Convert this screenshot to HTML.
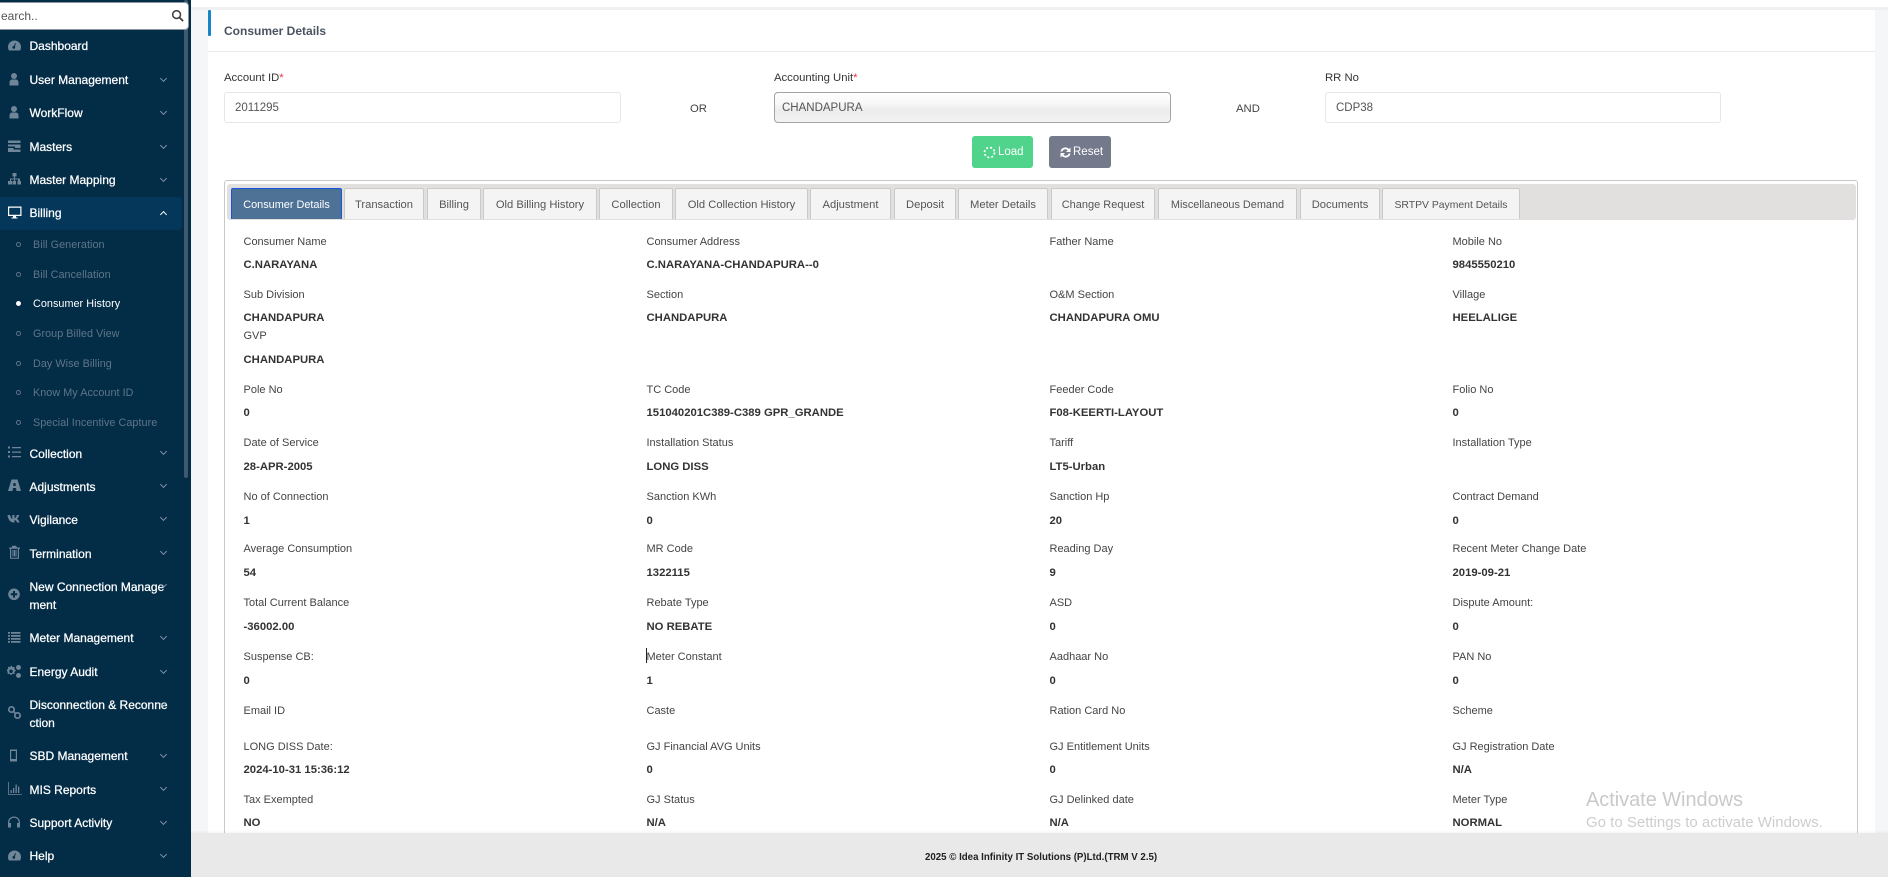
<!DOCTYPE html>
<html><head><meta charset="utf-8"><title>Consumer Details</title>
<style>
*{box-sizing:border-box}
html,body{margin:0;padding:0;width:1888px;height:877px;overflow:hidden;background:#f5f6f8;font-family:"Liberation Sans",sans-serif}
#side{position:absolute;left:0;top:0;width:191px;height:877px;background:#032c47;overflow:hidden}
#thumb{position:absolute;left:184px;top:0;width:4px;height:478px;background:#3f5a70;border-radius:2px}
#search{position:absolute;left:-6px;top:2px;width:195px;height:28px;background:#fff;border:1px solid #8a949c;border-radius:4px;font-size:12px;color:#555;line-height:26px;padding-left:0;overflow:hidden}
#search span{position:absolute;left:6px;top:0;white-space:nowrap}
.hl{position:absolute;left:0;top:197px;width:182px;height:33px;background:#04375a;border-radius:0 4px 4px 0}
.m{position:absolute;left:29.5px;color:#fff;font-size:12px;font-weight:400;line-height:18px;white-space:nowrap;-webkit-text-stroke:.25px #fff}
.s{position:absolute;left:33px;color:#5f7688;font-size:10.8px;line-height:16px;white-space:nowrap;letter-spacing:.05px}
.d{position:absolute;left:15.5px;width:5px;height:5px;border:1px solid #5f7688;border-radius:50%}
.ch{position:absolute;left:161px;width:5px;height:5px;border-right:1px solid #7f94a6;border-bottom:1px solid #7f94a6;transform:rotate(45deg)}
.i{position:absolute;left:7px;width:15px;height:15px;fill:#6f8598}
#top{position:absolute;left:191px;top:0;width:1697px;height:7px;background:#fff}
#strip{position:absolute;left:191px;top:7px;width:1697px;height:3px;background:#eef0f2}
#card{position:absolute;left:208px;top:10px;width:1667px;height:830px;background:#fff}
#bar{position:absolute;left:208px;top:10px;width:3px;height:26px;background:#1585c8;border-radius:1px}
#ttl{position:absolute;left:224px;top:22px;font-size:12px;font-weight:700;color:#4a5460;line-height:18px;white-space:nowrap}
#hr{position:absolute;left:208px;top:51px;width:1667px;height:1px;background:#e9ecef}
.lb{position:absolute;top:69.500px;font-size:11.3px;color:#333;line-height:16px;white-space:nowrap}
.lb b{color:#e8324a;font-weight:400}
.inp{position:absolute;top:92px;height:31px;width:397px;background:#fff;border:1px solid #e4e7ea;border-radius:3px;font-size:11.500px;color:#555;line-height:30px;padding-left:10px}
.txt{position:absolute;top:101px;font-size:11.300px;color:#444;line-height:16px}
.btn{position:absolute;top:136px;height:32px;border-radius:3px;color:#fff;font-size:11.500px;line-height:32px}
.btn span{position:absolute;top:0}
#box{position:absolute;left:224px;top:180px;width:1634px;height:660px;border:1px solid #c8c8c8;border-bottom:0;border-radius:3px 3px 0 0}
#tabbar{position:absolute;left:227px;top:184px;width:1629px;height:36px;background:#e2e0df;border-radius:3px}
.t{position:absolute;top:188px;height:31px;background:#f4f4f4;border:1px solid #cbc9c8;border-bottom:0;font-size:11.200px;color:#555;line-height:33px;text-align:center;white-space:nowrap;border-radius:2px 2px 0 0}
.t.on{background:#4e7296;color:#fff;border:1px solid #1a55e0;border-bottom:0}
.r{position:absolute;left:0;width:0;height:0}
.c1,.c2,.c3,.c4{position:absolute;top:0;white-space:nowrap}
.c1{left:243.500px}.c2{left:646.500px}.c3{left:1049.500px}.c4{left:1452.500px}
.l{position:absolute;left:0;top:0;font-size:11px;line-height:16px;color:#444}
.v{position:absolute;left:0;top:23px;font-size:11.300px;line-height:16px;font-weight:700;color:#333}
#foot{position:absolute;left:191px;top:833px;width:1697px;height:44px;background:#e9e9e9;box-shadow:0 -1px 2px rgba(0,0,0,.05)}
#foot span{position:absolute;left:734px;top:17px;font-size:9.700px;font-weight:700;color:#222;line-height:16px;white-space:nowrap}
#aw1{position:absolute;left:1586px;top:789px;font-size:19.900px;line-height:22px;color:#c9c9c9;white-space:nowrap}
#aw2{position:absolute;left:1586px;top:814px;font-size:15px;line-height:18px;color:#cdcdcd;white-space:nowrap}
#caret{position:absolute;left:646px;top:648px;width:1px;height:15px;background:#222}
</style></head><body>

<div id="side">
<div id="thumb"></div>
<div class="hl"></div>
<div id="search"><span>earch..</span>
<svg style="position:absolute;left:176px;top:6px" width="13" height="13" viewBox="0 0 14 14"><circle cx="6" cy="6" r="4.200" fill="none" stroke="#444" stroke-width="1.700"/><path d="M9 9l4 4" stroke="#444" stroke-width="2"/></svg></div>

<svg class="i" style="top:38px" viewBox="0 0 15 15"><path d="M7.500 2.500a6.500 6.500 0 0 0-6.500 6.500c0 1.500.4 2.700 1 3.500h11c.6-.8 1-2 1-3.500a6.500 6.500 0 0 0-6.500-6.500zM6.800 8l1.500-3 .6.2-1 3.300a1.400 1.400 0 1 1-1.100-.5z"/></svg>
<div class="m" style="top:37px">Dashboard</div>

<svg class="i" style="top:72px" viewBox="0 0 15 15"><circle cx="7" cy="4" r="3"/><path d="M2.500 13.500v-3c0-2 1.500-3 2.500-3h4c1 0 2.500 1 2.500 3v3z"/></svg>
<div class="m" style="top:71px">User Management</div><div class="ch" style="top:76px"></div>

<svg class="i" style="top:105px" viewBox="0 0 15 15"><circle cx="7" cy="4" r="3"/><path d="M2.500 13.500v-3c0-2 1.500-3 2.500-3h4c1 0 2.500 1 2.500 3v3z"/></svg>
<div class="m" style="top:104px">WorkFlow</div><div class="ch" style="top:109px"></div>

<svg class="i" style="top:139px" viewBox="0 0 15 15"><path d="M1 1.500h12.500v2.500H1zM1 5.500h12.500V9H8V7.500H1zM1 9h5.500v1.500H13.500V13H1z"/></svg>
<div class="m" style="top:138px">Masters</div><div class="ch" style="top:143px"></div>

<svg class="i" style="top:172px" viewBox="0 0 15 15"><path d="M5.500 1h4v3.500h-1.500v2h5v2.500h1v3.500h-3.500V9H11V7.500H8V9h1v3.500H5.500V9H7V7.500H4V9h1v3.500H1V9h2V6.500h4v-2H5.500z"/></svg>
<div class="m" style="top:171px">Master Mapping</div><div class="ch" style="top:176px"></div>

<svg class="i" style="top:205px;fill:#fff;width:15px" viewBox="0 0 15 15"><path d="M1 1.500h13.500v9.500H9v1.500h1.500v1h-6v-1H6V11H1zM2.200 2.700V9.800h11.100V2.700z"/></svg>
<div class="m" style="top:204px">Billing</div>
<div class="ch" style="top:212px;border-color:#fff;border-width:1.500px;transform:rotate(225deg)"></div>

<div class="d" style="top:242px"></div><div class="s" style="top:237px">Bill Generation</div>
<div class="d" style="top:272px"></div><div class="s" style="top:267px">Bill Cancellation</div>
<div class="d" style="top:301px;background:#fff;border-color:#fff"></div><div class="s" style="top:296px;color:#fff">Consumer History</div>
<div class="d" style="top:331px"></div><div class="s" style="top:326px">Group Billed View</div>
<div class="d" style="top:361px"></div><div class="s" style="top:356px">Day Wise Billing</div>
<div class="d" style="top:390px"></div><div class="s" style="top:385px">Know My Account ID</div>
<div class="d" style="top:420px"></div><div class="s" style="top:415px">Special Incentive Capture</div>

<svg class="i" style="top:445px" viewBox="0 0 15 15"><path d="M1 1.500h2v2H1zM5 2h9v1.300H5zM1 6h2v2H1zM5 6.500h9v1.300H5zM1 10.500h2v2H1zM5 11h9v1.300H5z"/></svg>
<div class="m" style="top:445px">Collection</div><div class="ch" style="top:449px"></div>

<svg class="i" style="top:478px" viewBox="0 0 15 15"><path d="M4.500 1.500h6l3.500 11.500H9.500L9 10H6l-.5 3H1zM6.500 5l-.3 3h2.600l-.3-3z"/></svg>
<div class="m" style="top:478px">Adjustments</div><div class="ch" style="top:482px"></div>

<svg class="i" style="top:511px" viewBox="0 0 15 15"><path d="M.5 4h2.500c.5 2 1.500 3.500 2.300 4V4h2.200v3.500C8.300 7.300 9.300 6 9.800 4h2.400c-.4 1.800-1.600 3.300-2.300 3.800.7.400 2 1.600 2.800 3.700H10C9.500 10 8.500 9 7.500 8.700v2.800H6.800C3.500 11.500 1 8.500.5 4z"/></svg>
<div class="m" style="top:511px">Vigilance</div><div class="ch" style="top:515px"></div>

<svg class="i" style="top:545px" viewBox="0 0 15 15"><path fill-rule="evenodd" d="M5 .8h4L10 2.500h3v1.300h-1v10H3v-10H2V2.500h3zM4.200 3.800V12.700h6.600V3.800zM5.500 5h1v6.500h-1zM7 5h1v6.500H7zM8.500 5h1v6.500h-1z"/></svg>
<div class="m" style="top:545px">Termination</div><div class="ch" style="top:549px"></div>

<svg class="i" style="top:587px" viewBox="0 0 15 15"><path fill-rule="evenodd" d="M7 1.500a5.800 5.800 0 1 1 0 11.600 5.800 5.800 0 0 1 0-11.600zM6 4v2.300H3.700v2H6v2.300h2V8.300h2.300v-2H8V4z"/></svg>
<div class="m" style="top:578px;line-height:18px">New Connection Manage<br>ment</div><div class="ch" style="top:582px"></div>

<svg class="i" style="top:630px" viewBox="0 0 15 15"><path d="M1 2h2v1.700H1zM4 2h9.500v1.700H4zM1 5h2v1.700H1zM4 5h9.500v1.700H4zM1 8h2v1.700H1zM4 8h9.500v1.700H4zM1 11h2v1.700H1zM4 11h9.500v1.700H4z"/></svg>
<div class="m" style="top:629px">Meter Management</div><div class="ch" style="top:634px"></div>

<svg class="i" style="top:664px" viewBox="0 0 15 15"><path fill-rule="evenodd" d="M5 3l1 .3.800-.6 1 1-.5.900.3.900 1 .2v1.500l-1 .2-.3.900.5.900-1 1-.8-.6-1 .3-.2 1H3.300l-.2-1-1-.3-.8.600-1-1 .5-.9-.3-.9-.5-.2V5.500l1-.2.300-.9-.5-.900 1-1 .8.600 1-.3.200-1h1.500zM4 5.500a1.800 1.800 0 1 0 0 3.600 1.800 1.800 0 0 0 0-3.600zM11.500 1a2 2 0 1 1 0 5 2 2 0 0 1 0-5zM11.500 9a2 2 0 1 1 0 5 2 2 0 0 1 0-5z"/></svg>
<div class="m" style="top:663px">Energy Audit</div><div class="ch" style="top:668px"></div>

<svg class="i" style="top:705px" viewBox="0 0 15 15"><g fill="none" stroke="#6f8598" stroke-width="1.700"><circle cx="4.500" cy="4.500" r="2.700"/><circle cx="10.500" cy="10.500" r="2.700"/><path d="M6 6l3 3"/></g></svg>
<div class="m" style="top:696px">Disconnection &amp; Reconne<br>ction</div><div class="ch" style="top:701px"></div>

<svg class="i" style="top:748px" viewBox="0 0 15 15"><path fill-rule="evenodd" d="M3 1.500h7v12H3zM4.200 3v8h4.600V3z"/></svg>
<div class="m" style="top:747px">SBD Management</div><div class="ch" style="top:752px"></div>

<svg class="i" style="top:781px" viewBox="0 0 15 15"><path d="M1 1h.8v12h13v.8H1zM3.500 9h1.300v3H3.500zM6 7h1.300v5H6zM8.500 3.500h1.300V12H8.500zM11 5.500h1.300V12H11z"/></svg>
<div class="m" style="top:781px">MIS Reports</div><div class="ch" style="top:785px"></div>

<svg class="i" style="top:815px" viewBox="0 0 15 15"><path fill-rule="evenodd" d="M7 1.500c3.500 0 6 2.500 6 6v5h-3V8h1.700v-.5c0-2.800-2-4.800-4.700-4.800S2.300 4.700 2.300 7.500V8H4v4.500H1v-5c0-3.500 2.500-6 6-6z"/></svg>
<div class="m" style="top:814px">Support Activity</div><div class="ch" style="top:819px"></div>

<svg class="i" style="top:848px" viewBox="0 0 15 15"><path d="M7.500 2.500a6.500 6.500 0 0 0-6.500 6.500c0 1.500.4 2.700 1 3.500h11c.6-.8 1-2 1-3.500a6.500 6.500 0 0 0-6.500-6.500zM6.800 8l1.500-3 .6.2-1 3.300a1.400 1.400 0 1 1-1.100-.5z"/></svg>
<div class="m" style="top:847px">Help</div><div class="ch" style="top:852px"></div>
</div>

<div id="top"></div><div id="strip"></div>
<div id="card"></div><div id="bar"></div>
<div id="ttl">Consumer Details</div>
<div id="hr"></div>

<div class="lb" style="left:224px">Account ID<b>*</b></div>
<div class="inp" style="left:224px">2011295</div>
<div class="txt" style="left:690px">OR</div>
<div class="lb" style="left:774px">Accounting Unit<b>*</b></div>
<div class="inp" style="left:774px;border:1px solid #a3a3a3;border-radius:4px;background:linear-gradient(#fff 0,#f8f8f8 35%,#ececec 60%,#f3f3f3 100%);padding-left:7px;color:#555">CHANDAPURA</div>
<div class="txt" style="left:1236px">AND</div>
<div class="lb" style="left:1325px">RR No</div>
<div class="inp" style="left:1325px;width:396px">CDP38</div>

<div class="btn" style="left:972px;width:61px;background:#50d38b">
<svg style="position:absolute;left:11px;top:10px" width="13" height="13" viewBox="0 0 13 13"><circle cx="6.500" cy="6.500" r="5" fill="none" stroke="#fff" stroke-width="1.800" stroke-dasharray="2 2"/></svg>
<span style="left:26px">Load</span></div>
<div class="btn" style="left:1049px;width:62px;background:#75798c">
<svg style="position:absolute;left:10px;top:10px" width="13" height="13" viewBox="0 0 13 13"><path d="M1.500 5.500A5 5 0 0 1 10 3l1.500-1.500V6H7l1.700-1.700A3.200 3.200 0 0 0 3.300 5.500zM11.500 7.500A5 5 0 0 1 3 10l-1.500 1.500V7H6L4.300 8.700a3.200 3.200 0 0 0 5.400-1.200z" fill="#fff"/></svg>
<span style="left:24px">Reset</span></div>

<div id="box"></div>
<div id="tabbar"></div>
<div class="t on" style="left:231px;width:111px;font-size:10.900px">Consumer Details</div>
<div class="t" style="left:344px;width:80px">Transaction</div>
<div class="t" style="left:427px;width:54px">Billing</div>
<div class="t" style="left:483px;width:114px">Old Billing History</div>
<div class="t" style="left:599px;width:74px">Collection</div>
<div class="t" style="left:675px;width:133px">Old Collection History</div>
<div class="t" style="left:810px;width:81px">Adjustment</div>
<div class="t" style="left:894px;width:62px">Deposit</div>
<div class="t" style="left:958px;width:90px">Meter Details</div>
<div class="t" style="left:1051px;width:104px;font-size:11px">Change Request</div>
<div class="t" style="left:1158px;width:139px;font-size:10.900px">Miscellaneous Demand</div>
<div class="t" style="left:1300px;width:80px">Documents</div>
<div class="t" style="left:1382px;width:138px;font-size:10.400px">SRTPV Payment Details</div>

<div class="r" style="top:234px">
<div class="c1"><div class="l">Consumer Name</div><div class="v">C.NARAYANA</div></div>
<div class="c2"><div class="l">Consumer Address</div><div class="v">C.NARAYANA-CHANDAPURA--0</div></div>
<div class="c3"><div class="l">Father Name</div></div>
<div class="c4"><div class="l">Mobile No</div><div class="v">9845550210</div></div>
</div>
<div class="r" style="top:287px">
<div class="c1"><div class="l">Sub Division</div><div class="v">CHANDAPURA</div></div>
<div class="c2"><div class="l">Section</div><div class="v">CHANDAPURA</div></div>
<div class="c3"><div class="l">O&amp;M Section</div><div class="v">CHANDAPURA OMU</div></div>
<div class="c4"><div class="l">Village</div><div class="v">HEELALIGE</div></div>
</div>
<div class="r" style="top:328px">
<div class="c1"><div class="l">GVP</div><div class="v" style="top:24px">CHANDAPURA</div></div>
</div>
<div class="r" style="top:382px">
<div class="c1"><div class="l">Pole No</div><div class="v" style="top:23px">0</div></div>
<div class="c2"><div class="l">TC Code</div><div class="v" style="top:23px">151040201C389-C389 GPR_GRANDE</div></div>
<div class="c3"><div class="l">Feeder Code</div><div class="v" style="top:23px">F08-KEERTI-LAYOUT</div></div>
<div class="c4"><div class="l">Folio No</div><div class="v" style="top:23px">0</div></div>
</div>
<div class="r" style="top:435px">
<div class="c1"><div class="l">Date of Service</div><div class="v" style="top:24px">28-APR-2005</div></div>
<div class="c2"><div class="l">Installation Status</div><div class="v" style="top:24px">LONG DISS</div></div>
<div class="c3"><div class="l">Tariff</div><div class="v" style="top:24px">LT5-Urban</div></div>
<div class="c4"><div class="l">Installation Type</div></div>
</div>
<div class="r" style="top:489px">
<div class="c1"><div class="l">No of Connection</div><div class="v" style="top:24px">1</div></div>
<div class="c2"><div class="l">Sanction KWh</div><div class="v" style="top:24px">0</div></div>
<div class="c3"><div class="l">Sanction Hp</div><div class="v" style="top:24px">20</div></div>
<div class="c4"><div class="l">Contract Demand</div><div class="v" style="top:24px">0</div></div>
</div>
<div class="r" style="top:541px">
<div class="c1"><div class="l">Average Consumption</div><div class="v" style="top:24px">54</div></div>
<div class="c2"><div class="l">MR Code</div><div class="v" style="top:24px">1322115</div></div>
<div class="c3"><div class="l">Reading Day</div><div class="v" style="top:24px">9</div></div>
<div class="c4"><div class="l">Recent Meter Change Date</div><div class="v" style="top:24px">2019-09-21</div></div>
</div>
<div class="r" style="top:595px">
<div class="c1"><div class="l">Total Current Balance</div><div class="v" style="top:24px">-36002.00</div></div>
<div class="c2"><div class="l">Rebate Type</div><div class="v" style="top:24px">NO REBATE</div></div>
<div class="c3"><div class="l">ASD</div><div class="v" style="top:24px">0</div></div>
<div class="c4"><div class="l">Dispute Amount:</div><div class="v" style="top:24px">0</div></div>
</div>
<div class="r" style="top:649px">
<div class="c1"><div class="l">Suspense CB:</div><div class="v" style="top:24px">0</div></div>
<div class="c2"><div class="l">Meter Constant</div><div class="v" style="top:24px">1</div></div>
<div class="c3"><div class="l">Aadhaar No</div><div class="v" style="top:24px">0</div></div>
<div class="c4"><div class="l">PAN No</div><div class="v" style="top:24px">0</div></div>
</div>
<div class="r" style="top:703px">
<div class="c1"><div class="l">Email ID</div></div>
<div class="c2"><div class="l">Caste</div></div>
<div class="c3"><div class="l">Ration Card No</div></div>
<div class="c4"><div class="l">Scheme</div></div>
</div>
<div class="r" style="top:739px">
<div class="c1"><div class="l">LONG DISS Date:</div><div class="v">2024-10-31 15:36:12</div></div>
<div class="c2"><div class="l">GJ Financial AVG Units</div><div class="v">0</div></div>
<div class="c3"><div class="l">GJ Entitlement Units</div><div class="v">0</div></div>
<div class="c4"><div class="l">GJ Registration Date</div><div class="v">N/A</div></div>
</div>
<div class="r" style="top:792px">
<div class="c1"><div class="l">Tax Exempted</div><div class="v">NO</div></div>
<div class="c2"><div class="l">GJ Status</div><div class="v">N/A</div></div>
<div class="c3"><div class="l">GJ Delinked date</div><div class="v">N/A</div></div>
<div class="c4"><div class="l">Meter Type</div><div class="v">NORMAL</div></div>
</div>
<div id="caret"></div>

<div id="aw1">Activate Windows</div>
<div id="aw2">Go to Settings to activate Windows.</div>
<div id="foot"><span>2025 © Idea Infinity IT Solutions (P)Ltd.(TRM V 2.5)</span></div>
</body></html>
